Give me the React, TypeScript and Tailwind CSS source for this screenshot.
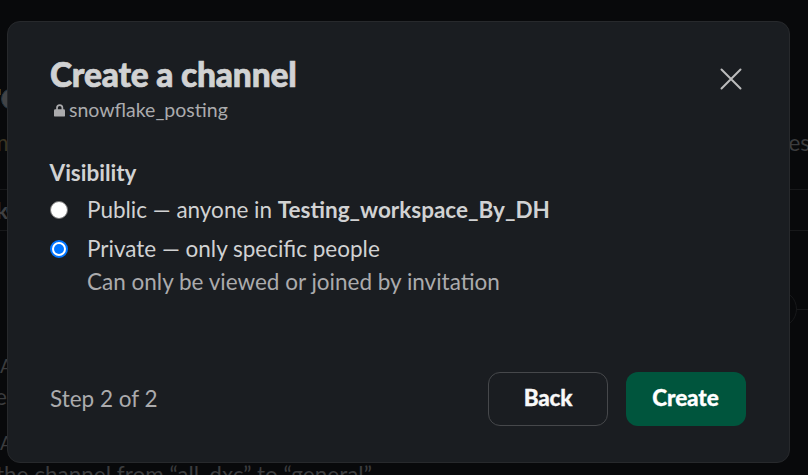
import React from "react";

function LockIcon() {
  return (
    <svg width="12" height="13" viewBox="0 0 12 13" fill="none" aria-hidden="true">
      <path d="M3 6V3.8a2.7 2.7 0 0 1 5.4 0V6" stroke="#ababad" strokeWidth="1.7" />
      <rect x="0" y="5.2" width="11" height="7.4" rx="1.2" fill="#ababad" />
    </svg>
  );
}

function CloseIcon() {
  return (
    <svg width="22" height="22" viewBox="0 0 22 22" fill="none" aria-hidden="true">
      <path d="M1.5 1.5l19 19M20.5 1.5l-19 19" stroke="#bcbcbd" strokeWidth="2" strokeLinecap="round" />
    </svg>
  );
}

function Radio({ checked }: { checked: boolean }) {
  return checked ? (
    <span role="radio" aria-checked="true" className="flex size-[18px] items-center justify-center rounded-full border-2 border-[#0075ff] bg-white">
      <span className="size-[10px] rounded-full bg-[#0075ff]" />
    </span>
  ) : (
    <span role="radio" aria-checked="false" className="size-[18px] rounded-full border border-[#767676] bg-white" />
  );
}

function Workspace() {
  return (
    <div className="flex h-full flex-col whitespace-nowrap text-[22.5px] leading-[33px] text-[#3b3c3e] *:shrink-0">
      <div className="mt-[85px] flex h-[28px] items-center">
        <span className="h-[6px] w-px -translate-y-[7px] bg-[#4a3518]" />
        <span className="h-[22px] w-[24px] rounded-full border border-[#1d3446] bg-[#414345]" />
      </div>
      <div className="mt-[13px] flex h-[33px] justify-between">
        <span className="-ml-[10px] text-[#3a3422]">m</span>
        <span className="-mr-[2px]">es</span>
      </div>
      <div className="mt-[30px] flex h-[42px] items-center border-y border-[#17181a]">
        <span className="-ml-[4px] font-bold text-[#3f4042]">k</span>
        <span className="-ml-[2px] size-[12px] rounded-full border border-[#16314a]" />
      </div>
      <div className="mt-[56px] flex h-[44px] items-center justify-end">
        <span className="h-[38px] w-[60px] rounded-full border border-[#17181a]" />
        <span className="h-px w-[11px] bg-[#17181a]" />
      </div>
      <div className="mt-[19px] flex h-[30px] items-center text-[19px]">A</div>
      <div className="-ml-[5px] flex h-[33px] items-center">e</div>
      <div className="mt-[14px] flex h-[30px] items-center text-[19px]">A</div>
      <div className="mt-px -ml-[4px] h-[33px]">the channel from “all_dxc” to “general”</div>
    </div>
  );
}

export default function App() {
  return (
    <main className="relative h-[475px] w-[808px] overflow-hidden bg-[#08090b] font-['Lato',sans-serif]">
      <Workspace />
      <div className="absolute inset-0 pt-[21px] pl-[7px]">
        <section
          role="dialog"
          aria-label="Create a channel"
          className="flex h-[442px] w-[783px] flex-col rounded-[13px] border border-[#27292c] bg-[#1a1d21] pr-[43px] pl-[42px] text-[22.5px] leading-[33px] text-[#d1d2d3]"
        >
          <header className="mt-[30px] flex items-start justify-between">
            <div>
              <h1 className="text-[33.5px] leading-[44px] font-black tracking-[-0.18px] [-webkit-text-stroke:0.7px_#d1d2d3]">Create a channel</h1>
              <div className="mt-[2px] flex h-[24px] items-center pl-[4px] text-[19.5px] leading-[24px] text-[#ababad]">
                <LockIcon />
                <span className="ml-[3px]">snowflake_posting</span>
              </div>
            </div>
            <button className="mt-[16px] mr-[4px]" aria-label="Close">
              <CloseIcon />
            </button>
          </header>
          <h2 className="mt-[34px] -ml-[0.5px] font-bold">Visibility</h2>
          <div className="mt-[4px] flex h-[33px] items-center gap-[19px]">
            <Radio checked={false} />
            <p>
              Public — anyone in <b className="font-bold">Testing_workspace_By_DH</b>
            </p>
          </div>
          <div className="mt-[6px] flex h-[33px] items-center gap-[19px]">
            <Radio checked />
            <p>Private — only specific people</p>
          </div>
          <p className="pl-[37px] text-[#ababad]">Can only be viewed or joined by invitation</p>
          <footer className="mt-[74px] flex h-[54px] items-center">
            <span className="mr-auto -translate-y-px text-[#ababad]">Step 2 of 2</span>
            <button className="h-[54px] w-[120px] rounded-xl border border-[#46484b] pb-[3px] font-black tracking-[-0.2px] text-[#f8f8f8] [-webkit-text-stroke:0.3px_#f8f8f8]">Back</button>
            <button className="ml-[18px] h-[54px] w-[120px] rounded-xl bg-[#00553d] pr-px pb-[3px] font-black tracking-[-0.1px] text-white [-webkit-text-stroke:0.3px_#ffffff]">Create</button>
          </footer>
        </section>
      </div>
    </main>
  );
}
